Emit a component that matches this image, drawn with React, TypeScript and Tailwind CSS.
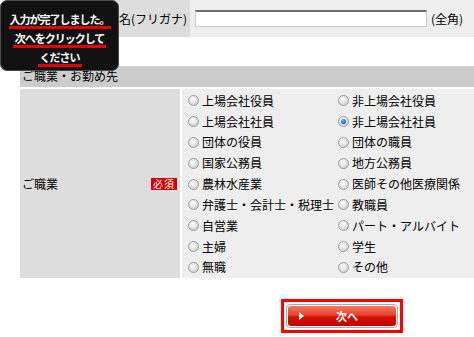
const font = { fontFamily: '"Noto Sans CJK JP", "Noto Sans", sans-serif' };

const left = ['上場会社役員', '上場会社社員', '団体の役員', '国家公務員', '農林水産業', '弁護士・会計士・税理士', '自営業', '主婦', '無職'];
const right = ['非上場会社役員', '非上場会社社員', '団体の職員', '地方公務員', '医師その他医療関係', '教職員', 'パート・アルバイト', '学生', 'その他'];

function Radio({ label, checked }: { label: string; checked?: boolean }) {
  return (
    <label className="flex items-center h-[20.4px] whitespace-nowrap">
      <span className="relative w-[11px] h-[11px] rounded-full border border-[#9a9a9a] bg-[radial-gradient(circle_at_40%_35%,#ffffff_0%,#e6e6e6_45%,#c4c4c4_100%)] shrink-0 flex items-center justify-center">
        {checked && (
          <span className="w-[5px] h-[5px] rounded-full bg-[radial-gradient(circle_at_40%_35%,#6cb8ff_0%,#0a5fc8_70%,#003a8c_100%)]" />
        )}
      </span>
      <span className="ml-[3px] text-[12px] text-black leading-none">{label}</span>
    </label>
  );
}

export default function App() {
  return (
    <div className="relative w-[474px] h-[337px] bg-white overflow-hidden" style={font}>
      <div className="pl-[20px]">
        {/* name row */}
        <div className="flex h-[37px]">
          <div className="w-[170px] bg-[#dddddd] flex items-center justify-end pr-[3px] text-[12px] text-black whitespace-nowrap">
            お勤め先名(フリガナ)
          </div>
          <div className="flex-1 bg-[#eeeeee] flex items-center pl-[5px]">
            <div className="w-[232px] h-[17px] bg-white border border-[#c8c8c8] border-t-2 border-t-[#6b6b6b]" />
            <span className="ml-[4px] text-[12px] text-black">(全角)</span>
          </div>
        </div>

        {/* section header */}
        <div className="mt-[29px] h-[21px] bg-[#cccccc] flex items-start pt-[1px] pl-[2px] text-[12px] text-black">
          ご職業・お勤め先
        </div>

        <div className="flex mt-[2px] h-[189px]">
          <div className="w-[160px] bg-[#dddddd] flex items-center justify-between pl-[2px] pr-[3px]">
            <span className="text-[12px] text-black">ご職業</span>
            <span className="bg-[#d40000] text-white text-[10px] leading-[12px] px-[2px] tracking-[1px]">必須</span>
          </div>
          <div className="flex-1 ml-[2px] bg-[#eeeeee] pt-[1.5px] pl-[6px] grid grid-cols-[150px_1fr]">
            {left.map((l, i) => (
              <div key={l} className="contents">
                <Radio label={l} />
                <Radio label={right[i]} checked={i === 1} />
              </div>
            ))}
          </div>
        </div>

        {/* next button */}
        <div className="mt-[21px] ml-[261px] w-[122px] border-[3px] border-[#ff0000] p-[2px] bg-white">
          <div className="border border-[#aaaaaa] rounded-[4px] p-[1px] bg-white">
            <button className="relative w-full h-[20px] rounded-[3px] bg-[linear-gradient(to_bottom,#f47a66_0%,#e8402c_45%,#d21200_55%,#c40000_100%)] flex items-center justify-center pl-[10px] text-white text-[11px] font-bold">
              <span className="absolute left-[11px] top-[6px] w-0 h-0 border-y-[4px] border-y-transparent border-l-[5px] border-l-white" />
              次へ
            </button>
          </div>
        </div>
      </div>

      {/* tooltip */}
      <div className="absolute left-0 top-0 w-[119px] h-[71px] bg-[#111111] rounded-[7px] border border-[#4a4a4a] flex flex-col items-center pt-[12px] text-white font-bold text-[11px] tracking-[-1px]">
        <span className="leading-[13px] border-b-[3px] border-[#e60000] px-[1px]">入力が完了しました。</span>
        <span className="mt-[3px] leading-[13px] border-b-[3px] border-[#e60000] px-[2px]">次へをクリックして</span>
        <span className="mt-[3px] leading-[13px] border-b-[3px] border-[#e60000] px-[2px]">ください</span>
      </div>
    </div>
  );
}
